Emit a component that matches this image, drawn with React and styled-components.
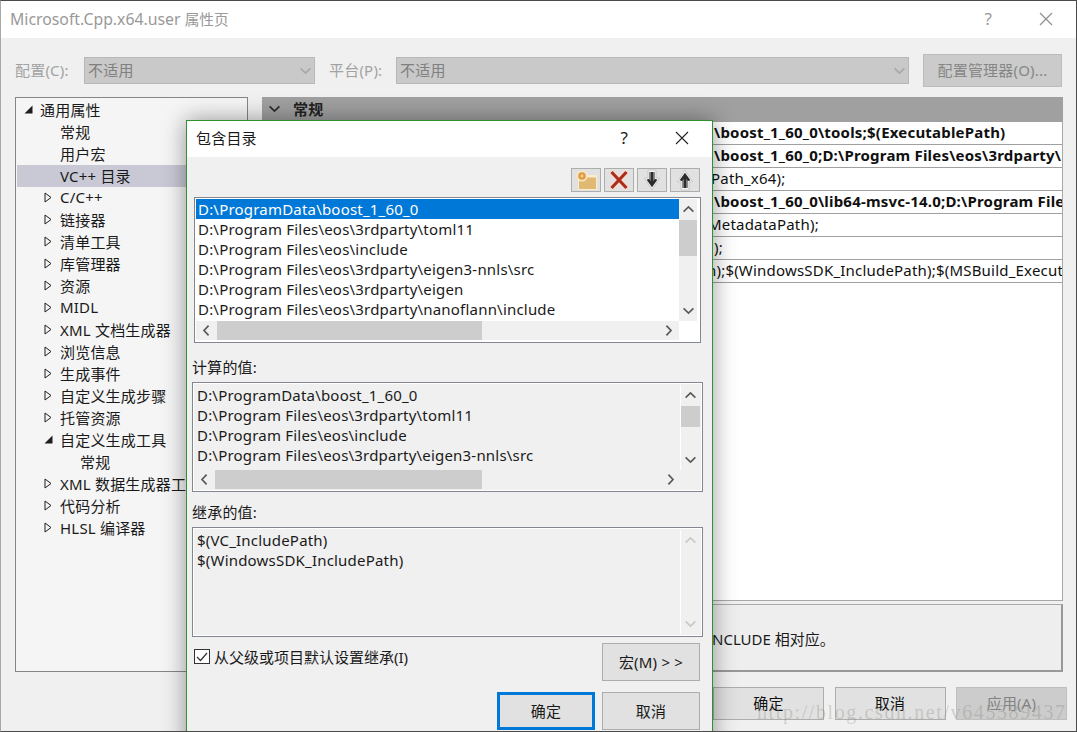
import styled, { createGlobalStyle } from "styled-components";

const GlobalStyle = createGlobalStyle`
    html, body {
        margin: 0;
        padding: 0;
        background: #f0f0f0;
    }
    * {
        box-sizing: border-box;
    }
`;

const FONT = `"Noto Sans", "Noto Sans CJK SC", sans-serif`;

const treeItems = [
    { label: "通用属性", level: 0, arrow: "open" },
    { label: "常规", level: 1 },
    { label: "用户宏", level: 1 },
    { label: "VC++ 目录", level: 1, selected: true },
    { label: "C/C++", level: 1, arrow: "closed" },
    { label: "链接器", level: 1, arrow: "closed" },
    { label: "清单工具", level: 1, arrow: "closed" },
    { label: "库管理器", level: 1, arrow: "closed" },
    { label: "资源", level: 1, arrow: "closed" },
    { label: "MIDL", level: 1, arrow: "closed" },
    { label: "XML 文档生成器", level: 1, arrow: "closed" },
    { label: "浏览信息", level: 1, arrow: "closed" },
    { label: "生成事件", level: 1, arrow: "closed" },
    { label: "自定义生成步骤", level: 1, arrow: "closed" },
    { label: "托管资源", level: 1, arrow: "closed" },
    { label: "自定义生成工具", level: 1, arrow: "open" },
    { label: "常规", level: 2 },
    { label: "XML 数据生成器工具", level: 1, arrow: "closed" },
    { label: "代码分析", level: 1, arrow: "closed" },
    { label: "HLSL 编译器", level: 1, arrow: "closed" },
];

const propertyRows = [
    { value: "\\boost_1_60_0\\tools;$(ExecutablePath)", bold: true, shift: 0 },
    { value: "\\boost_1_60_0;D:\\Program Files\\eos\\3rdparty\\nanoflann\\include", bold: true, shift: 0 },
    { value: "Path_x64);", shift: -3 },
    { value: "\\boost_1_60_0\\lib64-msvc-14.0;D:\\Program Files\\eos\\lib", bold: true, shift: 0 },
    { value: "MetadataPath);", shift: -6 },
    { value: ");", shift: 0 },
    { value: "h);$(WindowsSDK_IncludePath);$(MSBuild_ExecutablePath);$(VC_LibraryPath_x64);", shift: -7 },
];

const includeDirs = [
    "D:\\ProgramData\\boost_1_60_0",
    "D:\\Program Files\\eos\\3rdparty\\toml11",
    "D:\\Program Files\\eos\\include",
    "D:\\Program Files\\eos\\3rdparty\\eigen3-nnls\\src",
    "D:\\Program Files\\eos\\3rdparty\\eigen",
    "D:\\Program Files\\eos\\3rdparty\\nanoflann\\include",
];

const Chevron = ({ dir = "down", color = "#606060", size = 11 }) => {
    const paths = {
        up: "M0.6 7.6 L5.5 3 L10.4 7.6",
        down: "M0.6 3.4 L5.5 8 L10.4 3.4",
        left: "M7.6 0.6 L3 5.5 L7.6 10.4",
        right: "M3.4 0.6 L8 5.5 L3.4 10.4",
    };
    return (
        <svg width={size} height={size} viewBox="0 0 11 11" fill="none">
            <path d={paths[dir]} stroke={color} strokeWidth="1.7" />
        </svg>
    );
};

const CloseIcon = ({ color }) => (
    <svg width="14" height="14" viewBox="0 0 14 14" fill="none">
        <path d="M1 1 L13 13 M13 1 L1 13" stroke={color} strokeWidth="1.1" />
    </svg>
);

const TreeArrow = ({ type }) => {
    if (type === "open") {
        return (
            <svg width="9" height="9" viewBox="0 0 9 9">
                <path d="M8.5 0.5 V8.5 H0.5 Z" fill="#1e1e1e" />
            </svg>
        );
    }
    return (
        <svg width="8" height="11" viewBox="0 0 8 11" fill="none">
            <path d="M1 1 L7 5.5 L1 10 Z" stroke="#1e1e1e" strokeWidth="1" />
        </svg>
    );
};

const NewFolderIcon = () => (
    <svg width="26" height="22" viewBox="0 0 26 22">
        <path d="M5 6 H24 V21 H5 Z" fill="#fbeccf" />
        <path d="M6 8.5 H23 V20 H6 Z" fill="#e0b974" />
        <circle cx="9" cy="7" r="5.6" fill="#fbe6bd" />
        <circle cx="9" cy="7" r="3.8" fill="#dc9a45" />
        <circle cx="9" cy="7" r="1.4" fill="#f7d99c" />
    </svg>
);

const DeleteIcon = () => (
    <svg width="24" height="22" viewBox="0 0 24 22" fill="none">
        <path d="M4 2.5 L20 19.5 M20 2.5 L4 19.5" stroke="#f3ddd4" strokeWidth="6" />
        <path d="M4.5 3 L19.5 19 M19.5 3 L4.5 19" stroke="#ad2d1a" strokeWidth="3.2" />
    </svg>
);

const MoveIcon = ({ up }) => (
    <svg width="20" height="22" viewBox="0 0 20 22" style={{ transform: up ? "scaleY(-1)" : "none" }}>
        <path d="M6 1 H14 V9 H17.5 L10 21 L2.5 9 H6 Z" fill="#f6f6f6" stroke="#c8c8c8" strokeWidth="1" />
        <path d="M7 3 H13 V10 H15.5 L10 18.5 L4.5 10 H7 Z" fill="#8e8e8e" />
        <path d="M10 3 V15.5 M6 10.5 L10 16 L14 10.5" fill="none" stroke="#2c2c2c" strokeWidth="2.4" />
    </svg>
);

const VerticalScroll = ({ thumbTop, thumbHeight, disabled }) => (
    <VTrack>
        <ArrowBox $h={21}>
            <Chevron dir="up" color={disabled ? "#c8c8c8" : "#5a5a5a"} />
        </ArrowBox>
        <VThumbSlot>
            {!disabled && <VThumb $top={thumbTop} $height={thumbHeight} />}
        </VThumbSlot>
        <ArrowBox $h={21}>
            <Chevron dir="down" color={disabled ? "#c8c8c8" : "#5a5a5a"} />
        </ArrowBox>
    </VTrack>
);

const HorizontalScroll = ({ thumbWidth }) => (
    <HTrack>
        <ArrowBox $w={21}>
            <Chevron dir="left" color="#5a5a5a" />
        </ArrowBox>
        <HThumbSlot>
            <HThumb $width={thumbWidth} />
        </HThumbSlot>
        <ArrowBox $w={21}>
            <Chevron dir="right" color="#5a5a5a" />
        </ArrowBox>
    </HTrack>
);

export default function App() {
    return (
        <Window>
            <GlobalStyle />
            <TitleBar>
                <WindowTitle>Microsoft.Cpp.x64.user <TitleCjk>属性页</TitleCjk></WindowTitle>
                <TitleHelp>?</TitleHelp>
                <CloseIcon color="#8c8c8c" />
            </TitleBar>

            <ConfigRow>
                <ConfigLabel $width={69}>配置(C):</ConfigLabel>
                <Select $width={231}>
                    <span>不适用</span>
                    <Chevron dir="down" color="#a8a8a8" />
                </Select>
                <ConfigLabel $width={67} $gap={14}>平台(P):</ConfigLabel>
                <Select $width={513}>
                    <span>不适用</span>
                    <Chevron dir="down" color="#a8a8a8" />
                </Select>
                <ManagerButton>配置管理器(O)...</ManagerButton>
            </ConfigRow>

            <Main>
                <Tree>
                    {treeItems.map((item, i) => (
                        <TreeRow key={i} $selected={item.selected} $level={item.level}>
                            <TreeArrowBox>{item.arrow && <TreeArrow type={item.arrow} />}</TreeArrowBox>
                            {item.label}
                        </TreeRow>
                    ))}
                </Tree>

                <RightPanel>
                    <SectionHeader>
                        <Chevron dir="down" color="#2a2a2a" />
                        <span>常规</span>
                    </SectionHeader>
                    <PropertyGrid>
                        {propertyRows.map((row) => (
                            <PropertyRow key={row.value}>
                                <PropertyValue $bold={row.bold} $shift={row.shift}>{row.value}</PropertyValue>
                            </PropertyRow>
                        ))}
                    </PropertyGrid>
                    <Description>
                        <span>NCLUDE 相对应。</span>
                    </Description>
                </RightPanel>
            </Main>

            <Footer>
                <FooterButton>确定</FooterButton>
                <FooterButton>取消</FooterButton>
                <FooterButton $disabled>应用(A)</FooterButton>
            </Footer>

            <Dialog>
                <DialogTitleBar>
                    <DialogTitle>包含目录</DialogTitle>
                    <DialogHelp>?</DialogHelp>
                    <CloseIcon color="#222" />
                </DialogTitleBar>
                <DialogBody>
                    <Toolbar>
                        <ToolButton><NewFolderIcon /></ToolButton>
                        <ToolButton><DeleteIcon /></ToolButton>
                        <ToolButton><MoveIcon /></ToolButton>
                        <ToolButton><MoveIcon up /></ToolButton>
                    </Toolbar>

                    <EditList>
                        <ListRows>
                            {includeDirs.map((dir, i) => (
                                <ListRow key={dir} $selected={i === 0}>{dir}</ListRow>
                            ))}
                        </ListRows>
                        <VerticalScroll thumbTop={0} thumbHeight={36} />
                        <HorizontalScroll thumbWidth={265} />
                    </EditList>

                    <FieldLabel $top={15}>计算的值:</FieldLabel>
                    <ReadOnlyList>
                        <ListRows $edge>
                            {includeDirs.slice(0, 4).map((dir) => (
                                <ListRow key={dir}>{dir}</ListRow>
                            ))}
                        </ListRows>
                        <VerticalScroll thumbTop={0} thumbHeight={21} />
                        <HorizontalScroll thumbWidth={267} />
                    </ReadOnlyList>

                    <FieldLabel $top={11}>继承的值:</FieldLabel>
                    <InheritList>
                        <ListRows $edge>
                            <ListRow>$(VC_IncludePath)</ListRow>
                            <ListRow>$(WindowsSDK_IncludePath)</ListRow>
                        </ListRows>
                        <VerticalScroll disabled />
                    </InheritList>

                    <OptionsRow>
                        <CheckLabel>
                            <CheckBox>
                                <svg width="12" height="10" viewBox="0 0 12 10" fill="none">
                                    <path d="M1 5 L4.5 8.5 L11 1" stroke="#333" strokeWidth="1.2" />
                                </svg>
                            </CheckBox>
                            从父级或项目默认设置继承(I)
                        </CheckLabel>
                        <DialogButton>宏(M) &gt; &gt;</DialogButton>
                    </OptionsRow>

                    <DialogActions>
                        <DialogButton $primary>确定</DialogButton>
                        <DialogButton>取消</DialogButton>
                    </DialogActions>
                </DialogBody>
            </Dialog>

            <Watermark>http://blog.csdn.net/v645589437</Watermark>
        </Window>
    );
}

const Window = styled.div`
    position: relative;
    width: 1077px;
    height: 732px;
    overflow: hidden;
    background: #f0f0f0;
    border: 1px solid #4a4a4a;
    border-left-color: #a8a8a8;
    font-family: ${FONT};
    font-size: 15px;
    letter-spacing: 0.2px;
    color: #1a1a1a;
`;

const TitleBar = styled.div`
    height: 37px;
    background: #fff;
    display: flex;
    align-items: center;
    padding: 0 23px 2px 9px;
`;

const WindowTitle = styled.div`
    flex: 1;
    font-size: 15.8px;
    letter-spacing: 0;
    color: #999;
`;

const TitleCjk = styled.span`
    font-size: 14.7px;
`;

const TitleHelp = styled.div`
    font-size: 17px;
    color: #999;
    margin-right: 47px;
`;

const ConfigRow = styled.div`
    display: flex;
    align-items: center;
    height: 33px;
    margin: 16px 0 10px;
    padding-left: 14px;
`;

const ConfigLabel = styled.div`
    width: ${(p) => p.$width}px;
    margin-left: ${(p) => p.$gap || 0}px;
    padding-bottom: 2px;
    color: #a2a2a2;
`;

const Select = styled.div`
    width: ${(p) => p.$width}px;
    height: 27px;
    display: flex;
    align-items: center;
    justify-content: space-between;
    padding: 0 3px;
    background: #c9c9c9;
    border: 1px solid #b8b8b8;
    color: #808080;
    span {
        flex: 1;
        padding-bottom: 2px;
    }
`;

const ManagerButton = styled.div`
    width: 139px;
    height: 33px;
    margin-left: 14px;
    padding-bottom: 2px;
    display: flex;
    align-items: center;
    justify-content: center;
    background: #cbcbcb;
    border: 1px solid #bcbcbc;
    color: #868686;
`;

const Main = styled.div`
    display: flex;
    gap: 14px;
    height: 575px;
    padding-left: 14px;
`;

const Tree = styled.div`
    width: 233px;
    height: 575px;
    padding: 1px;
    background: #f5f5f5;
    border: 1px solid #868686;
`;

const TreeRow = styled.div`
    height: 22px;
    display: flex;
    align-items: center;
    white-space: nowrap;
    padding-left: ${(p) => 6 + p.$level * 20}px;
    padding-bottom: 2px;
    background: ${(p) => (p.$selected ? "#c9c9d6" : "transparent")};
`;

const TreeArrowBox = styled.div`
    width: 17px;
    display: flex;
    align-items: center;
    padding-left: 1px;
    flex-shrink: 0;
`;

const RightPanel = styled.div`
    width: 801px;
    display: flex;
    flex-direction: column;
`;

const SectionHeader = styled.div`
    height: 25px;
    display: flex;
    align-items: center;
    gap: 13px;
    padding: 0 0 2px 7px;
    background: #a0a0a0;
    font-weight: 700;
    color: #222;
`;

const PropertyGrid = styled.div`
    height: 479px;
    background: #fff;
    border-right: 1px solid #a8a8a8;
    border-bottom: 1px solid #a8a8a8;
`;

const PropertyRow = styled.div`
    height: 23px;
    display: flex;
    align-items: center;
    overflow: hidden;
    white-space: nowrap;
    padding: 0 0 2px 452px;
    border-bottom: 1px solid #a0a0a0;
`;

const PropertyValue = styled.div`
    margin-left: ${(p) => p.$shift}px;
    font-weight: ${(p) => (p.$bold ? 700 : 400)};
    color: #101010;
`;

const Description = styled.div`
    height: 68px;
    margin-top: 3px;
    display: flex;
    align-items: center;
    padding: 2px 0 0 449px;
    letter-spacing: 0;
    background: #eee;
    border: 1px solid #aaa;
    border-right: 2px solid #999;
    border-bottom: 2px solid #999;
`;

const Footer = styled.div`
    display: flex;
    justify-content: flex-end;
    gap: 10.5px;
    padding: 15px 9px 0 0;
`;

const FooterButton = styled.div`
    width: 111px;
    height: 33px;
    padding-bottom: 3px;
    display: flex;
    align-items: center;
    justify-content: center;
    background: ${(p) => (p.$disabled ? "#cccccc" : "#e1e1e1")};
    border: 1px solid ${(p) => (p.$disabled ? "#bfbfbf" : "#adadad")};
    color: ${(p) => (p.$disabled ? "#838383" : "#111")};
`;

const Dialog = styled.div`
    position: absolute;
    left: 185px;
    top: 119px;
    width: 527px;
    height: 640px;
    background: #f0f0f0;
    border: 1px solid #2f9130;
    box-shadow: 0 0 22px rgba(0, 0, 0, 0.4);
`;

const DialogTitleBar = styled.div`
    height: 36px;
    display: flex;
    align-items: center;
    background: #fff;
    padding: 0 23px 3px 9px;
`;

const DialogTitle = styled.div`
    flex: 1;
`;

const DialogHelp = styled.div`
    font-size: 17px;
    margin-right: 47px;
`;

const DialogBody = styled.div`
    padding: 11px 9px 0 5px;
`;

const Toolbar = styled.div`
    display: flex;
    justify-content: flex-end;
    gap: 3px;
    margin: 0 3px 5px 0;
`;

const ToolButton = styled.div`
    width: 30px;
    height: 24px;
    display: flex;
    align-items: center;
    justify-content: center;
    background: #e1e1e1;
    border: 1px solid #adadad;
`;

const ScrollGrid = styled.div`
    display: grid;
    grid-template-columns: 1fr 19px;
    border: 1px solid #828790;
`;

const EditList = styled(ScrollGrid)`
    height: 146px;
    margin: 0 2px;
    padding: 1px 3px 1px 1px;
    grid-template-columns: 1fr 18px;
    grid-template-rows: 122px 19px;
    background: #fff;
`;

const ReadOnlyList = styled(ScrollGrid)`
    height: 110px;
    padding: 2px 2px 2px 1px;
    grid-template-rows: 85px 19px;
    background: #f0f0f0;
    box-shadow: inset 0 0 0 1px #fff;
`;

const InheritList = styled(ScrollGrid)`
    height: 110px;
    padding: 2px 2px 2px 1px;
    background: #f0f0f0;
    box-shadow: inset 0 0 0 1px #fff;
`;

const ListRows = styled.div`
    overflow: hidden;
    padding-left: ${(p) => (p.$edge ? 1 : 0)}px;
    ${(p) => p.$edge && "border-right: 1px solid #fff;"}
`;

const ListRow = styled.div`
    height: 20px;
    display: flex;
    align-items: center;
    padding-left: 2px;
    white-space: nowrap;
    background: ${(p) => (p.$selected ? "#0078d7" : "transparent")};
    color: ${(p) => (p.$selected ? "#fff" : "#1a1a1a")};
`;

const VTrack = styled.div`
    display: flex;
    flex-direction: column;
    background: #f0f0f0;
`;

const HTrack = styled.div`
    display: flex;
    background: #f0f0f0;
`;

const ArrowBox = styled.div`
    display: flex;
    align-items: center;
    justify-content: center;
    flex-shrink: 0;
    ${(p) => p.$h && `height: ${p.$h}px;`}
    ${(p) => p.$w && `width: ${p.$w}px;`}
`;

const VThumbSlot = styled.div`
    flex: 1;
`;

const VThumb = styled.div`
    margin-top: ${(p) => p.$top}px;
    height: ${(p) => p.$height}px;
    background: #cdcdcd;
`;

const HThumbSlot = styled.div`
    flex: 1;
`;

const HThumb = styled.div`
    width: ${(p) => p.$width}px;
    height: 100%;
    background: #cdcdcd;
`;

const FieldLabel = styled.div`
    height: 20px;
    display: flex;
    align-items: center;
    padding-bottom: 3px;
    margin: ${(p) => p.$top}px 0 4px;
`;

const OptionsRow = styled.div`
    display: flex;
    justify-content: space-between;
    align-items: flex-start;
    margin: 6px 3px 0 2px;
`;

const CheckLabel = styled.div`
    display: flex;
    align-items: center;
    gap: 4px;
    margin-top: 3px;
    letter-spacing: 0;
`;

const CheckBox = styled.div`
    width: 16px;
    height: 15px;
    display: flex;
    align-items: center;
    justify-content: center;
    background: #fff;
    border: 1px solid #333;
`;

const DialogButton = styled.div`
    width: 98px;
    height: 38px;
    padding-bottom: 2px;
    display: flex;
    align-items: center;
    justify-content: center;
    background: #e1e1e1;
    border: ${(p) => (p.$primary ? "3px solid #0078d7" : "1px solid #adadad")};
`;

const DialogActions = styled.div`
    display: flex;
    justify-content: flex-end;
    gap: 7px;
    margin: 11px 3px 0 0;
`;

const Watermark = styled.div`
    position: absolute;
    left: 756px;
    top: 700px;
    font-family: "Liberation Serif", serif;
    font-size: 20px;
    letter-spacing: 1.6px;
    color: rgba(120, 120, 105, 0.28);
    white-space: nowrap;
    pointer-events: none;
`;
